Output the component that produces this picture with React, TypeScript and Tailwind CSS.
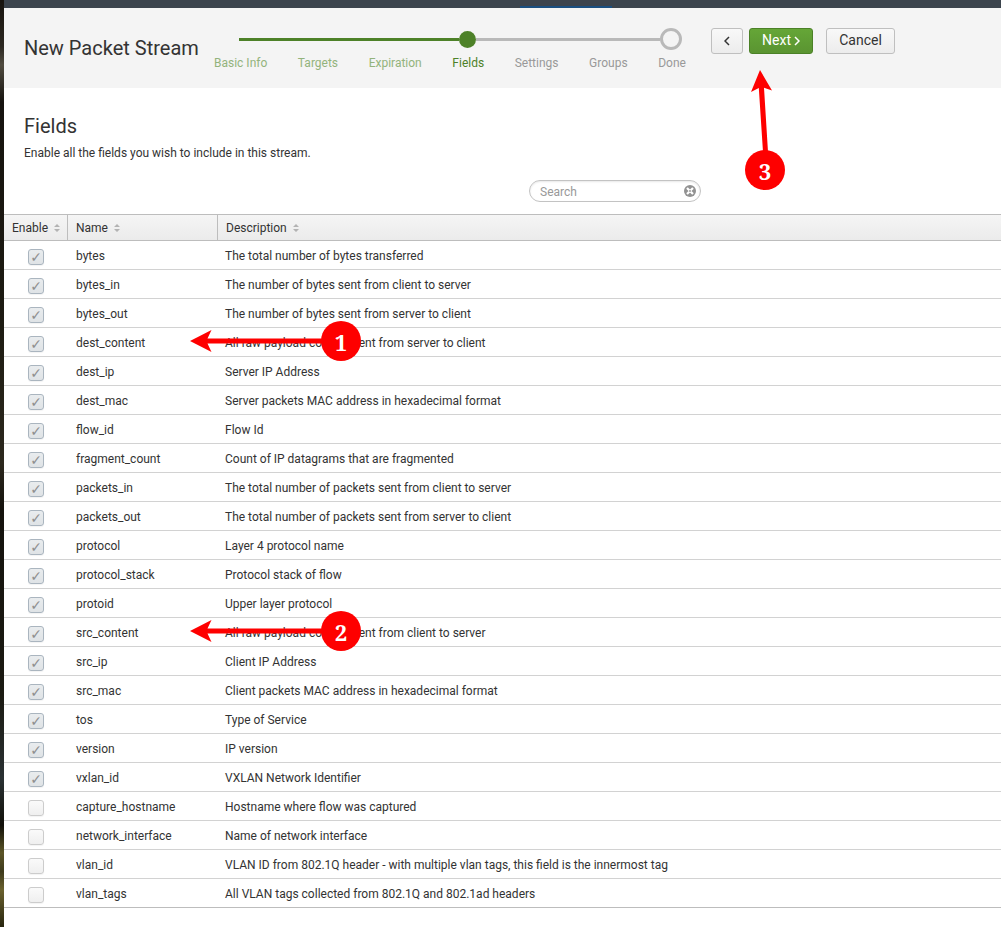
import React from "react";

type Field = { name: string; description: string; enabled: boolean; callout?: number };

const fields: Field[] = [
  { name: "bytes", description: "The total number of bytes transferred", enabled: true },
  { name: "bytes_in", description: "The number of bytes sent from client to server", enabled: true },
  { name: "bytes_out", description: "The number of bytes sent from server to client", enabled: true },
  { name: "dest_content", description: "All raw payload content sent from server to client", enabled: true, callout: 1 },
  { name: "dest_ip", description: "Server IP Address", enabled: true },
  { name: "dest_mac", description: "Server packets MAC address in hexadecimal format", enabled: true },
  { name: "flow_id", description: "Flow Id", enabled: true },
  { name: "fragment_count", description: "Count of IP datagrams that are fragmented", enabled: true },
  { name: "packets_in", description: "The total number of packets sent from client to server", enabled: true },
  { name: "packets_out", description: "The total number of packets sent from server to client", enabled: true },
  { name: "protocol", description: "Layer 4 protocol name", enabled: true },
  { name: "protocol_stack", description: "Protocol stack of flow", enabled: true },
  { name: "protoid", description: "Upper layer protocol", enabled: true },
  { name: "src_content", description: "All raw payload content sent from client to server", enabled: true, callout: 2 },
  { name: "src_ip", description: "Client IP Address", enabled: true },
  { name: "src_mac", description: "Client packets MAC address in hexadecimal format", enabled: true },
  { name: "tos", description: "Type of Service", enabled: true },
  { name: "version", description: "IP version", enabled: true },
  { name: "vxlan_id", description: "VXLAN Network Identifier", enabled: true },
  { name: "capture_hostname", description: "Hostname where flow was captured", enabled: false },
  { name: "network_interface", description: "Name of network interface", enabled: false },
  { name: "vlan_id", description: "VLAN ID from 802.1Q header - with multiple vlan tags, this field is the innermost tag", enabled: false },
  { name: "vlan_tags", description: "All VLAN tags collected from 802.1Q and 802.1ad headers", enabled: false },
];

const steps = [
  { label: "Basic Info", color: "text-[#93b37c]" },
  { label: "Targets", color: "text-[#93b37c]" },
  { label: "Expiration", color: "text-[#93b37c]" },
  { label: "Fields", color: "text-[#4d8128]" },
  { label: "Settings", color: "text-[#999999]" },
  { label: "Groups", color: "text-[#999999]" },
  { label: "Done", color: "text-[#999999]" },
];

function Badge({ value }: { value: number }) {
  return (
    <span className="flex size-10 items-center justify-center rounded-full bg-[#fe0000] pt-0.5 font-['Noto_Serif','DejaVu_Serif',serif] text-[22px] leading-6 font-bold text-white">
      {value}
    </span>
  );
}

function SideCallout({ value }: { value: number }) {
  return (
    <div className="pointer-events-none absolute -top-[7px] -left-[27px] z-10 flex items-center">
      <svg width="132" height="22" viewBox="0 0 132 22" className="-mr-px" aria-hidden="true">
        <path d="M0 11 21.500 0 17.500 8.500H132V13.500H17.500L21.500 22Z" fill="#fe0000" />
      </svg>
      <Badge value={value} />
    </div>
  );
}

function UpCallout({ value }: { value: number }) {
  return (
    <div className="pointer-events-none absolute top-[42px] -left-1 z-10 flex flex-col items-center">
      <svg width="40" height="82" viewBox="0 0 40 82" className="-mb-0.5" aria-hidden="true">
        <path d="M15 0 27 20.500 19 17.800 23 82H18L13.800 18 6 22Z" fill="#fe0000" />
      </svg>
      <Badge value={value} />
    </div>
  );
}

function SortIcon() {
  return (
    <svg width="6" height="8" viewBox="0 0 6 8" className="mt-px" fill="#b3b3b3" aria-hidden="true">
      <path d="M0 3 3 0 6 3ZM0 5H6L3 8Z" />
    </svg>
  );
}

function HeaderCell({ label, width }: { label: string; width: string }) {
  return (
    <th scope="col" className={`${width} h-[27px] border-y border-l border-[#bdbdbd] bg-linear-to-b from-[#f5f5f5] to-[#ebebeb] p-0 px-2 text-left font-normal first:border-l-0`}>
      <button type="button" className="flex items-center gap-1.5 leading-4">
        {label}
        <SortIcon />
      </button>
    </th>
  );
}

const plainButton = "flex h-[26px] items-center justify-center rounded-[3px] border border-[#bfbfbf] bg-linear-to-b from-[#f8f8f8] to-[#ececec]";

export default function App() {
  return (
    <div className="flex min-h-screen bg-white pr-px font-['Roboto','Liberation_Sans',sans-serif] text-xs text-[#333333]">
      <div className="w-1 shrink-0 bg-[linear-gradient(180deg,#17130e_0%,#2b2721_5%,#504b40_7%,#16130f_11%,#1d1b12_35%,#2c281e_50%,#14120d_55%,#1b1a12_75%,#2a3133_84%,#111009_89%,#5c5527_92%,#3e3a1c_94%,#6a612e_96%,#28250f_100%)]" />
      <div className="min-w-0 flex-1">
        <div className="flex h-2 items-end bg-[#3c444d] pl-[516px]">
          <div className="h-0.5 w-[92px] bg-[#1a4f81]" />
        </div>

        <header className="flex h-20 items-start bg-[#f4f4f4] pl-5">
          <h1 className="w-[190px] pt-7 text-[20px] leading-6 whitespace-nowrap">New Packet Stream</h1>
          <nav className="w-[472px] pt-5" aria-label="Wizard steps">
            <div className="mr-1 ml-[25px] flex h-[22px] items-center">
              <div className="h-[3px] flex-[220] bg-[#4d8128]" />
              <div className="size-[17px] shrink-0 rounded-full bg-[#4d8128]" />
              <div className="h-[3px] flex-[184] bg-[#b9b9b9]" />
              <div className="size-[22px] shrink-0 rounded-full border-[3px] border-[#b9b9b9]" />
            </div>
            <ol className="mt-[5px] flex justify-between leading-4">
              {steps.map((s) => (
                <li key={s.label} className={s.color}>{s.label}</li>
              ))}
            </ol>
          </nav>
          <div className="ml-[25px] flex pt-5 text-sm">
            <button type="button" aria-label="Back" className={`${plainButton} w-8 pb-px`}>
              <svg width="6" height="10" viewBox="0 0 6 10" fill="none" stroke="#333333" strokeWidth="1.500" aria-hidden="true">
                <path d="M5 1 1 5l4 4" />
              </svg>
            </button>
            <div className="relative ml-1.5">
              <button type="button" className="flex h-[26px] w-16 items-center justify-center gap-[3px] rounded-[3px] border border-[#4b8127] bg-linear-to-b from-[#65a637] to-[#5a9431] pb-0.5 text-white">
                Next
                <svg width="6" height="10" viewBox="0 0 6 10" fill="none" stroke="white" strokeWidth="1.500" className="mt-px" aria-hidden="true">
                  <path d="M1 1l4 4-4 4" />
                </svg>
              </button>
              <UpCallout value={3} />
            </div>
            <button type="button" className={`${plainButton} ml-[13px] w-[69px] pb-0.5`}>Cancel</button>
          </div>
        </header>

        <main>
          <div className="px-5 pt-[26px]">
            <h2 className="text-[20px] leading-6">Fields</h2>
            <p className="mt-[7px] leading-4">Enable all the fields you wish to include in this stream.</p>
          </div>
          <div className="mt-[19px] mb-3 ml-[525px] flex h-[22px] w-[172px] items-center rounded-full border border-[#c3c3c3] pr-1 pl-2.5 shadow-[inset_0_1px_2px_#00000018]">
            <input type="search" aria-label="Search" placeholder="Search" className="min-w-0 flex-1 bg-transparent pt-px leading-4 outline-none placeholder:text-[#999999]" />
            <button type="button" aria-label="Clear search">
              <svg width="12" height="12" viewBox="0 0 12 12" aria-hidden="true">
                <circle cx="6" cy="6" r="6" fill="#929292" />
                <path d="M3 3l6 6M9 3l-6 6" stroke="white" strokeWidth="2.200" />
                <circle cx="6" cy="6" r="0.900" fill="#929292" />
              </svg>
            </button>
          </div>

          <table className="w-full table-fixed border-separate border-spacing-0">
            <thead>
              <tr>
                <HeaderCell label="Enable" width="w-[63px]" />
                <HeaderCell label="Name" width="w-[150px]" />
                <HeaderCell label="Description" width="w-auto" />
              </tr>
            </thead>
            <tbody className="[&>tr:last-child>td]:border-[#bdbdbd]">
              {fields.map((f) => (
                <tr key={f.name}>
                  <td className="h-[29px] border-b border-[#d2d2d2] p-0">
                    <input
                      id={f.name}
                      type="checkbox"
                      defaultChecked={f.enabled}
                      className="mt-1 ml-6 flex size-4 appearance-none items-center justify-center rounded-[3px] border border-[#cccccc] bg-linear-to-b from-[#fafafa] to-[#efefef] shadow-[0_1px_1px_#0000000d] checked:border-[#aab5bf] checked:from-[#e9ecee] checked:to-[#dfe3e6] checked:before:font-['DejaVu_Sans'] checked:before:text-[14px] checked:before:leading-[14px] checked:before:text-[#8f8f8f] checked:before:content-['✓']"
                    />
                  </td>
                  <td className="border-b border-[#d2d2d2] p-0 pt-0.5 pl-[9px] leading-4">
                    <label htmlFor={f.name}>{f.name}</label>
                  </td>
                  <td className="relative border-b border-[#d2d2d2] p-0 pt-0.5 pl-2 leading-4">
                    {f.description}
                    {f.callout !== undefined && <SideCallout value={f.callout} />}
                  </td>
                </tr>
              ))}
            </tbody>
          </table>
        </main>
      </div>
    </div>
  );
}
